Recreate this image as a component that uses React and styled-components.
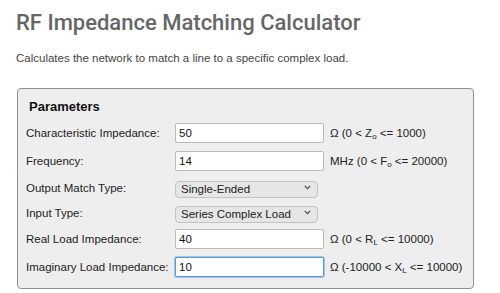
import React from "react";
import styled, { createGlobalStyle } from "styled-components";

const GlobalStyle = createGlobalStyle`
  body {
    margin: 0;
    background: #ffffff;
    font-family: "Liberation Sans", Arial, sans-serif;
  }
`;

const Page = styled.div`
  width: 500px;
  height: 293px;
  padding: 10px 26px 0 16px;
  box-sizing: border-box;
  overflow: hidden;
`;

const Title = styled.h1`
  margin: 0;
  font-family: Roboto, "Liberation Sans", sans-serif;
  font-weight: 500;
  font-size: 22px;
  line-height: 26px;
  color: #666666;
`;

const Subtitle = styled.p`
  margin: 15px 0 0;
  font-size: 11.5px;
  line-height: 14px;
  color: #444444;
`;

const Panel = styled.div`
  margin: 23px 0 0 1px;
  background: #eeeeee;
  border: 1px solid #8f8f8f;
  border-radius: 4px;
  padding: 10px 8px 11px;
  display: grid;
  grid-template-columns: 149px 155px auto;
  row-gap: 8px;
  align-items: center;
`;

const Heading = styled.div`
  grid-column: 1 / -1;
  padding-left: 3px;
  font-weight: bold;
  font-size: 13px;
  line-height: 16px;
  color: #111111;
`;

const Label = styled.label`
  font-size: 11.5px;
  color: #222222;
`;

const TextInput = styled.input`
  box-sizing: border-box;
  width: 149px;
  height: 20px;
  margin: 0;
  padding: 0 3px;
  font-family: "Liberation Sans", Arial, sans-serif;
  font-size: 11.5px;
  color: #111111;
  background: #ffffff;
  border: 1px solid ${(p) => (p.$focused ? "#5b9bd8" : "#b9b9b9")};
  border-radius: 2px;
  box-shadow: ${(p) => (p.$focused ? "0 0 0 1px #9cc4ec" : "none")};
  outline: none;
`;

const SelectWrap = styled.div`
  position: relative;
  width: 143px;
  height: 17px;
`;

const Select = styled.select`
  appearance: none;
  -webkit-appearance: none;
  box-sizing: border-box;
  width: 100%;
  height: 17px;
  margin: 0;
  padding: 0 0 0 5px;
  font-family: "Liberation Sans", Arial, sans-serif;
  font-size: 11.5px;
  color: #222222;
  background: #e6e6e6;
  border: 1px solid #c2c2c2;
  border-radius: 4px;
  outline: none;
`;

const Chevron = styled.svg`
  position: absolute;
  right: 7px;
  top: 6px;
  pointer-events: none;
`;

const Units = styled.span`
  font-size: 11.5px;
  color: #222222;
  white-space: nowrap;
  sub {
    font-size: 8px;
    vertical-align: -2px;
    line-height: 0;
  }
`;

const rows = [
  { label: "Characteristic Impedance:", value: "50", unit: ["Ω (0 < Z", "o", " <= 1000)"] },
  { label: "Frequency:", value: "14", unit: ["MHz (0 < F", "o", " <= 20000)"] },
  { label: "Output Match Type:", options: ["Single-Ended", "Differential"] },
  { label: "Input Type:", options: ["Series Complex Load", "Parallel Complex Load"] },
  { label: "Real Load Impedance:", value: "40", unit: ["Ω (0 < R", "L", " <= 10000)"] },
  {
    label: "Imaginary Load Impedance:",
    value: "10",
    unit: ["Ω (-10000 < X", "L", " <= 10000)"],
    focused: true,
  },
];

export default function App() {
  return (
    <Page>
      <GlobalStyle />
      <Title>RF Impedance Matching Calculator</Title>
      <Subtitle>Calculates the network to match a line to a specific complex load.</Subtitle>
      <Panel>
        <Heading>Parameters</Heading>
        {rows.map((row) => (
          <React.Fragment key={row.label}>
            <Label>{row.label}</Label>
            {row.options ? (
              <SelectWrap>
                <Select defaultValue={row.options[0]}>
                  {row.options.map((o) => (
                    <option key={o}>{o}</option>
                  ))}
                </Select>
                <Chevron width="7" height="5" viewBox="0 0 7 5">
                  <path d="M0.8 0.8 L3.5 3.6 L6.2 0.8" fill="none" stroke="#444" strokeWidth="1.1" />
                </Chevron>
              </SelectWrap>
            ) : (
              <TextInput defaultValue={row.value} $focused={row.focused} />
            )}
            <Units>
              {row.unit && (
                <>
                  {row.unit[0]}
                  <sub>{row.unit[1]}</sub>
                  {row.unit[2]}
                </>
              )}
            </Units>
          </React.Fragment>
        ))}
      </Panel>
    </Page>
  );
}
